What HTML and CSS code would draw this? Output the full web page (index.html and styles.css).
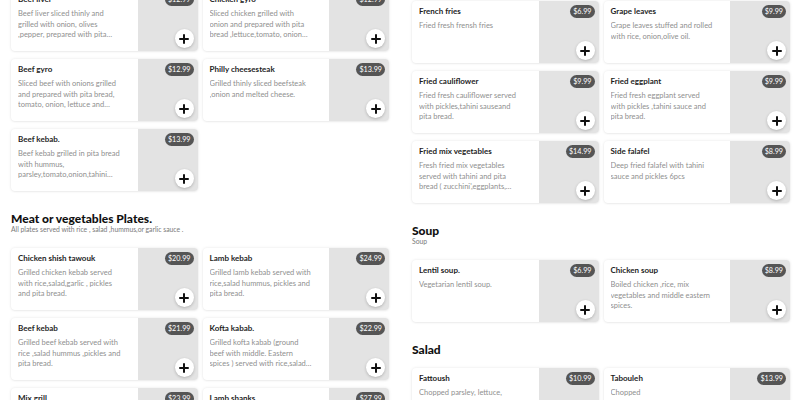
FILE: index.html
```html
<!DOCTYPE html>
<html lang="en">
<head>
<meta charset="utf-8">
<title>Menu</title>
<link rel="stylesheet" href="styles.css">
</head>
<body>
<div class="page">
  <div class="col col-left">
    <div class="grid">
      <div class="card"><div class="info"><h3 class="title">Beef liver</h3><p class="desc">Beef liver sliced thinly and grilled with onion, olives ,pepper, prepared with pita bread, tomato and onion.</p></div><div class="thumb"><span class="price">$12.99</span><span class="add"></span></div></div>
      <div class="card"><div class="info"><h3 class="title">Chicken gyro</h3><p class="desc">Sliced chicken grilled with onion and prepared with pita bread ,lettuce,tomato, onion and garlic sauce.</p></div><div class="thumb"><span class="price">$12.99</span><span class="add"></span></div></div>
      <div class="card"><div class="info"><h3 class="title">Beef gyro</h3><p class="desc">Sliced beef with onions grilled and prepared with pita bread, tomato, onion, lettuce and tahini sauce.</p></div><div class="thumb"><span class="price">$12.99</span><span class="add"></span></div></div>
      <div class="card"><div class="info"><h3 class="title">Philly cheesesteak</h3><p class="desc">Grilled thinly sliced beefsteak ,onion and melted cheese.</p></div><div class="thumb"><span class="price">$13.99</span><span class="add"></span></div></div>
      <div class="card"><div class="info"><h3 class="title">Beef kebab.</h3><p class="desc">Beef kebab grilled in pita bread with hummus, parsley,tomato,onion,tahini sauce and pickles.</p></div><div class="thumb"><span class="price">$13.99</span><span class="add"></span></div></div>
    </div>
    <section class="section">
      <h2 class="heading">Meat or vegetables Plates.</h2>
      <p class="sub">All plates served with rice , salad ,hummus,or garlic sauce .</p>
      <div class="grid">
        <div class="card"><div class="info"><h3 class="title">Chicken shish tawouk</h3><p class="desc">Grilled chicken kebab served with rice,salad,garlic , pickles and pita bread.</p></div><div class="thumb"><span class="price">$20.99</span><span class="add"></span></div></div>
        <div class="card"><div class="info"><h3 class="title">Lamb kebab</h3><p class="desc">Grilled lamb kebab served with rice,salad hummus, pickles and pita bread.</p></div><div class="thumb"><span class="price">$24.99</span><span class="add"></span></div></div>
        <div class="card"><div class="info"><h3 class="title">Beef kebab</h3><p class="desc">Grilled beef kebab served with rice ,salad hummus ,pickles and pita bread.</p></div><div class="thumb"><span class="price">$21.99</span><span class="add"></span></div></div>
        <div class="card"><div class="info"><h3 class="title">Kofta kabab.</h3><p class="desc">Grilled kofta kabab (ground beef with middle. Eastern spices ) served with rice,salad hummus and pita bread.</p></div><div class="thumb"><span class="price">$22.99</span><span class="add"></span></div></div>
        <div class="card"><div class="info"><h3 class="title">Mix grill</h3><p class="desc">Chicken kebab, beef kebab and kofta served with rice,salad and pita bread.</p></div><div class="thumb"><span class="price">$23.99</span><span class="add"></span></div></div>
        <div class="card"><div class="info"><h3 class="title">Lamb shanks</h3><p class="desc">Slow cooked lamb shanks served with rice,salad and pita bread.</p></div><div class="thumb"><span class="price">$27.99</span><span class="add"></span></div></div>
      </div>
    </section>
  </div>

  <div class="col col-right">
    <div class="grid">
      <div class="card"><div class="info"><h3 class="title">French fries</h3><p class="desc">Fried fresh frensh fries</p></div><div class="thumb"><span class="price">$6.99</span><span class="add"></span></div></div>
      <div class="card"><div class="info"><h3 class="title">Grape leaves</h3><p class="desc">Grape leaves stuffed and rolled with rice, onion,olive oil.</p></div><div class="thumb"><span class="price">$9.99</span><span class="add"></span></div></div>
      <div class="card"><div class="info"><h3 class="title">Fried cauliflower</h3><p class="desc">Fried fresh cauliflower served with pickles,tahini sauseand pita bread.</p></div><div class="thumb"><span class="price">$9.99</span><span class="add"></span></div></div>
      <div class="card"><div class="info"><h3 class="title">Fried eggplant</h3><p class="desc">Fried fresh eggplant served with pickles ,tahini sauce and pita bread.</p></div><div class="thumb"><span class="price">$9.99</span><span class="add"></span></div></div>
      <div class="card"><div class="info"><h3 class="title">Fried mix vegetables</h3><p class="desc">Fresh fried mix vegetables served with tahini and pita bread ( zucchini',eggplants, cauliflower and potato).</p></div><div class="thumb"><span class="price">$14.99</span><span class="add"></span></div></div>
      <div class="card"><div class="info"><h3 class="title">Side falafel</h3><p class="desc">Deep fried falafel with tahini sauce and pickles 6pcs</p></div><div class="thumb"><span class="price">$8.99</span><span class="add"></span></div></div>
    </div>
    <section class="section">
      <h2 class="heading">Soup</h2>
      <p class="sub">Soup</p>
      <div class="grid">
        <div class="card"><div class="info"><h3 class="title">Lentil soup.</h3><p class="desc">Vegetarian lentil soup.</p></div><div class="thumb"><span class="price">$6.99</span><span class="add"></span></div></div>
        <div class="card"><div class="info"><h3 class="title">Chicken soup</h3><p class="desc">Boiled chicken ,rice, mix vegetables and middle eastern spices.</p></div><div class="thumb"><span class="price">$8.99</span><span class="add"></span></div></div>
      </div>
    </section>
    <section class="section">
      <h2 class="heading">Salad</h2>
      <div class="grid">
        <div class="card"><div class="info"><h3 class="title">Fattoush</h3><p class="desc">Chopped parsley, lettuce, tomato, cucumber, onion and fried pita.</p></div><div class="thumb"><span class="price">$10.99</span><span class="add"></span></div></div>
        <div class="card"><div class="info"><h3 class="title">Tabouleh</h3><p class="desc">Chopped parsley,tomato,onion,bulgur wheat,lemon juice and olive oil.</p></div><div class="thumb"><span class="price">$13.99</span><span class="add"></span></div></div>
      </div>
    </section>
  </div>
</div>
</body>
</html>
```

FILE: styles.css
```css
html, body {
  margin: 0;
  padding: 0;
  background: #ffffff;
  height: 400px;
  overflow: hidden;
}

body {
  font-family: "Lato", "Inter", "Liberation Sans", sans-serif;
  color: #1e1e1e;
}

.page {
  display: grid;
  grid-template-columns: 378px 378px;
  column-gap: 23px;
  padding: 0 11px;
  align-items: start;
}

.col-left {
  margin-top: -11px;
}

.col-right {
  margin-top: 1px;
}

.grid {
  display: grid;
  grid-template-columns: 1fr 1fr;
  column-gap: 5px;
  row-gap: 8px;
}

.card {
  display: flex;
  height: 62px;
  background: #ffffff;
  border-radius: 4px;
  box-shadow: 0 0 3px rgba(0, 0, 0, 0.10), 0 1px 2px rgba(0, 0, 0, 0.04);
  overflow: hidden;
}

.info {
  flex: 1;
  min-width: 0;
  padding: 5px 16px 0 7px;
}

.title {
  margin: 0;
  font-size: 8px;
  font-weight: 700;
  line-height: 10px;
  color: #1e1e1e;
  white-space: nowrap;
}

.desc {
  margin: 5px 0 0;
  font-size: 7.5px;
  line-height: 10.6px;
  color: #8f8f8f;
  display: -webkit-box;
  -webkit-line-clamp: 3;
  -webkit-box-orient: vertical;
  overflow: hidden;
}

.thumb {
  width: 60px;
  flex: none;
  background: #e3e3e3;
  display: flex;
  flex-direction: column;
  justify-content: space-between;
  align-items: flex-end;
  padding: 4px 4px 3px 0;
  box-sizing: border-box;
}

.price {
  background: #555555;
  color: #ffffff;
  font-size: 7.2px;
  line-height: 13px;
  height: 13px;
  padding: 0 3px;
  border-radius: 6.5px;
}

.add {
  width: 19px;
  height: 19px;
  border-radius: 50%;
  background: #ffffff;
  box-shadow: 0 1px 3px rgba(0, 0, 0, 0.22);
  position: relative;
}

.add::before,
.add::after {
  content: "";
  position: absolute;
  left: 50%;
  top: 50%;
  background: #111111;
  border-radius: 1px;
}

.add::before {
  width: 10px;
  height: 2px;
  margin: -1px 0 0 -5px;
}

.add::after {
  width: 2px;
  height: 10px;
  margin: -5px 0 0 -1px;
}

.section {
  margin-top: 21px;
}

.heading {
  margin: 0;
  font-size: 12px;
  line-height: 14px;
  font-weight: 900;
  color: #111111;
}

.sub {
  margin: -2px 0 0;
  font-size: 6.8px;
  line-height: 10px;
  color: #7a7a7a;
}

.heading + .grid {
  margin-top: 11px;
}

.sub + .grid {
  margin-top: 14px;
}
```
